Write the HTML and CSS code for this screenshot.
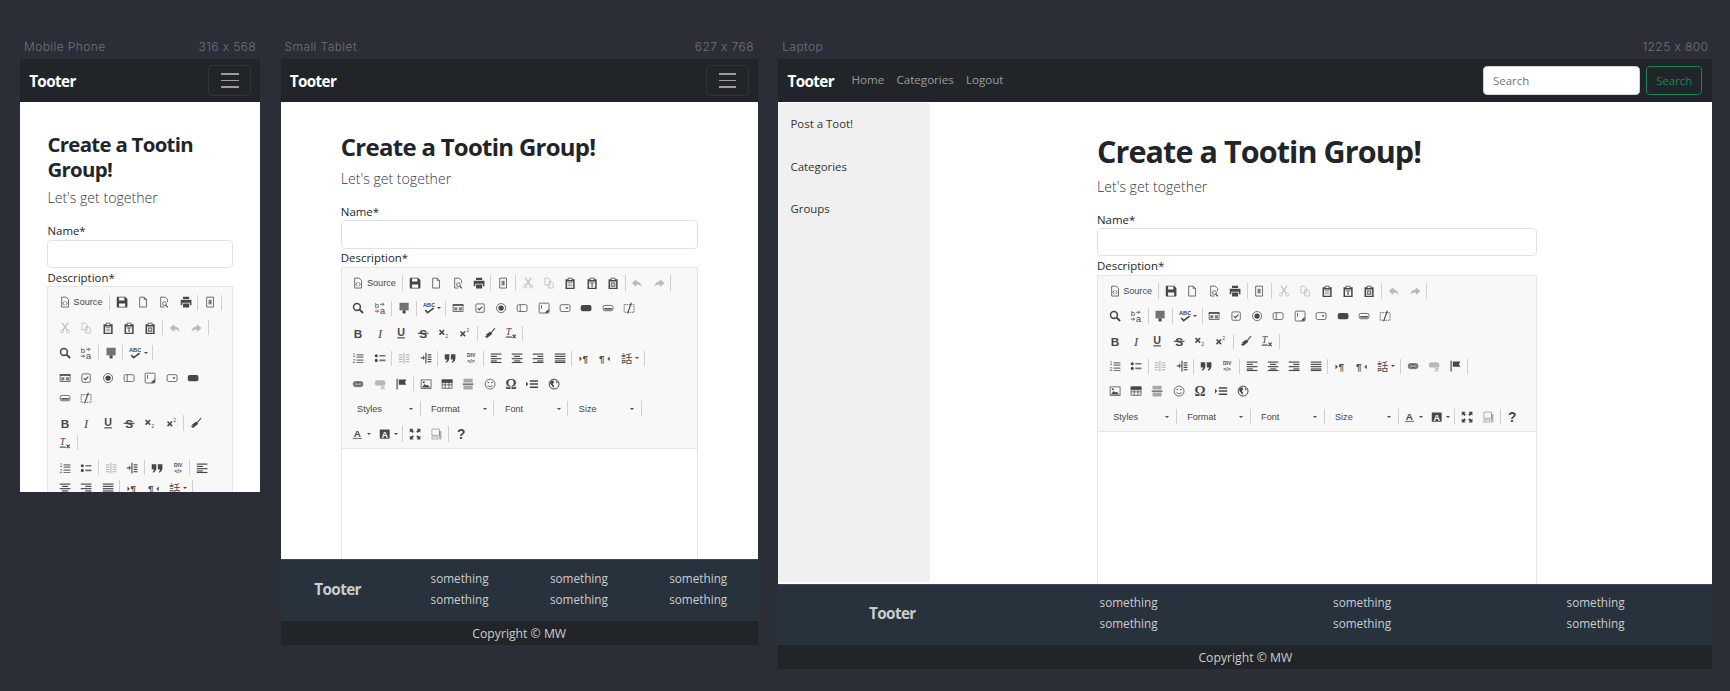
FILE: index.html
```html
<!DOCTYPE html>
<html lang="en">
<head>
    <meta charset="UTF-8">
    <title>Tooter - Responsive preview</title>
    <link rel="stylesheet" href="styles.css">
</head>
<body>
    <div class="devices">

        <section class="device">
            <div class="device-label"><span>Mobile Phone</span><span>316 x 568</span></div>
            <div class="screen screen-phone">
                <nav class="navbar">
                    <a class="brand">Tooter</a>
                    <button class="toggler" type="button"><span></span><span></span><span></span></button>
                </nav>
                <div class="page">
                    <main class="content">
                        <h1>Create a Tootin Group!</h1>
                        <p class="lead">Let's get together</p>
                        <label class="field-label">Name*</label>
                        <input class="field" type="text">
                        <label class="field-label">Description*</label>
                        <div class="editor"></div>
                    </main>
                </div>
            </div>
        </section>

        <section class="device">
            <div class="device-label"><span>Small Tablet</span><span>627 x 768</span></div>
            <div class="screen screen-tablet">
                <nav class="navbar">
                    <a class="brand">Tooter</a>
                    <button class="toggler" type="button"><span></span><span></span><span></span></button>
                </nav>
                <div class="page">
                    <main class="content">
                        <h1>Create a Tootin Group!</h1>
                        <p class="lead">Let's get together</p>
                        <label class="field-label">Name*</label>
                        <input class="field" type="text">
                        <label class="field-label">Description*</label>
                        <div class="editor"></div>
                    </main>
                </div>
                <footer class="footer">
                    <div class="footer-grid">
                        <div class="footer-brand">Tooter</div>
                        <ul><li>something</li><li>something</li></ul>
                        <ul><li>something</li><li>something</li></ul>
                        <ul><li>something</li><li>something</li></ul>
                    </div>
                    <div class="copyright">Copyright © MW</div>
                </footer>
            </div>
        </section>

        <section class="device">
            <div class="device-label"><span>Laptop</span><span>1225 x 800</span></div>
            <div class="screen screen-laptop">
                <nav class="navbar">
                    <a class="brand">Tooter</a>
                    <ul class="nav-links">
                        <li>Home</li>
                        <li>Categories</li>
                        <li>Logout</li>
                    </ul>
                    <form class="search">
                        <input class="search-input" type="text" placeholder="Search">
                        <button class="search-btn" type="button">Search</button>
                    </form>
                </nav>
                <div class="page">
                    <aside class="sidebar">
                        <a>Post a Toot!</a>
                        <a>Categories</a>
                        <a>Groups</a>
                    </aside>
                    <main class="content">
                        <h1>Create a Tootin Group!</h1>
                        <p class="lead">Let's get together</p>
                        <label class="field-label">Name*</label>
                        <input class="field" type="text">
                        <label class="field-label">Description*</label>
                        <div class="editor"></div>
                    </main>
                </div>
                <footer class="footer">
                    <div class="footer-grid">
                        <div class="footer-brand">Tooter</div>
                        <ul><li>something</li><li>something</li></ul>
                        <ul><li>something</li><li>something</li></ul>
                        <ul><li>something</li><li>something</li></ul>
                    </div>
                    <div class="copyright">Copyright © MW</div>
                </footer>
            </div>
        </section>

    </div>
    <script src="toolbar.js"></script>
</body>
</html>
```

FILE: styles.css
```css
body {
    margin: 0;
    background: #2b2e37;
    font-family: "Open Sans", "Noto Sans", sans-serif;
}

.devices {
    display: flex;
    align-items: flex-start;
    gap: 20.4px;
    padding: 39px 0 0 20px;
}

.device-label {
    display: flex;
    justify-content: space-between;
    height: 20px;
    padding: 0 4px;
    font-family: Inter, sans-serif;
    font-size: 12px;
    font-weight: 300;
    line-height: 15px;
    letter-spacing: 0.4px;
    color: #6f737e;
}

/* screens are laid out at their real size and shrunk like the preview does */
.screen {
    zoom: 0.7625;
    display: flex;
    flex-direction: column;
    overflow: hidden;
    background: #fff;
    color: #212529;
    font-size: 16px;
    line-height: 24px;
}

.screen-phone { width: 315px; height: 568px; }
.screen-tablet { width: 626px; height: 768px; }
.screen-laptop { width: 1225px; height: 800px; }

/* navbar */
.navbar {
    display: flex;
    flex: none;
    align-items: center;
    justify-content: space-between;
    height: 56px;
    padding: 0 12px;
    background: #212529;
}

.brand {
    padding-top: 2px;
    font-size: 20px;
    font-weight: 700;
    letter-spacing: -0.8px;
    color: #fff;
}

.toggler {
    display: flex;
    flex-direction: column;
    justify-content: center;
    gap: 6.5px;
    width: 56px;
    height: 40px;
    padding: 0 15px;
    background: none;
    border: 1px solid rgba(255, 255, 255, 0.07);
    border-radius: 6px;
}

.toggler span {
    height: 2px;
    background: rgba(255, 255, 255, 0.55);
}

.nav-links {
    display: flex;
    margin: 0 0 0 15px;
    padding: 0;
    list-style: none;
    color: rgba(255, 255, 255, 0.55);
    font-size: 15.2px;
}

.nav-links li { padding: 0 8px; }

.search {
    display: flex;
    gap: 8px;
    margin: 0 1px 0 auto;
}

.search-input {
    box-sizing: border-box;
    width: 206px;
    height: 38px;
    padding: 0 12px;
    border: 1px solid #ced4da;
    border-radius: 6px;
    font: 15px "Open Sans", sans-serif;
}

.search-input::placeholder { color: #6c757d; }

.search-btn {
    width: 74px;
    height: 38px;
    padding: 0;
    background: none;
    border: 1px solid #198754;
    border-radius: 6px;
    font: 15px "Open Sans", sans-serif;
    color: #198754;
}

/* page body */
.page {
    display: flex;
    flex: 1;
    min-height: 0;
    overflow: hidden;
}

.screen-phone .page { flex: none; }

.sidebar {
    flex: none;
    width: 199px;
    margin: 2px 0;
    background: #f0f0f0;
    font-size: 15px;
    color: #333;
}

.sidebar a {
    display: block;
    height: 55.6px;
    padding: 0 16px;
    line-height: 54px;
}

.content {
    flex: 1;
    min-width: 0;
    padding: 40px 36px 0;
}

.screen-tablet .content { padding: 41px 78px 0 79px; }
.screen-laptop .content { padding: 41px 230px 0 219px; }

h1 {
    margin: 0 0 8px;
    font-size: 26.74px;
    font-weight: 700;
    line-height: 1.2;
    letter-spacing: -0.9px;
}

.screen-tablet h1 { font-size: 31.4px; letter-spacing: -0.92px; }
.screen-laptop h1 { font-size: 40px; letter-spacing: -1.2px; }

.lead {
    margin: 0 0 16px;
    font-size: 18.5px;
    font-weight: 300;
    line-height: 30px;
    color: #343a40;
}

.field-label {
    display: block;
    font-size: 15px;
    line-height: 23px;
}

.field {
    display: block;
    box-sizing: border-box;
    width: 100%;
    height: 37px;
    margin-bottom: 1px;
    border: 1px solid #dee2e6;
    border-radius: 6px;
}

/* rich text editor */
.editor {
    height: 640px;
    border: 1px solid #e6e6e6;
}

.tb {
    padding: 7px 10px 0 8px;
    background: #f8f8f8;
    border-bottom: 1px solid #e6e6e6;
}

.tb-row,
.tb-group {
    display: flex;
    flex-wrap: wrap;
}

.tb-group { margin-bottom: 7px; }
.tb-row:last-child { margin-bottom: -1px; }

.tb-btn {
    display: flex;
    align-items: center;
    justify-content: center;
    width: 28px;
    height: 26px;
    color: #474747;
}

.tb-btn.off { color: #b9b9b9; }
.tb-btn.wide { width: 35px; justify-content: flex-start; padding-left: 6px; box-sizing: border-box; }
.tb-btn.src { width: 70px; justify-content: flex-start; padding-left: 6px; box-sizing: border-box; }

.ic { flex: none; fill: currentColor; }
.ic .s { fill: none; stroke: currentColor; }
.ic text { font-family: "Liberation Sans", sans-serif; stroke: none; }

.tb-text {
    margin-left: 3px;
    font: 12px/16px "Liberation Sans", sans-serif;
    color: #484848;
}

.caret {
    flex: none;
    margin-left: 3px;
    border: 3px solid transparent;
    border-top-color: #484848;
    border-bottom: 0;
}

.combo {
    display: flex;
    align-items: center;
    justify-content: space-between;
    box-sizing: border-box;
    width: 93px;
    height: 26px;
    padding: 0 8px 0 12px;
    font: 12px/16px "Liberation Sans", sans-serif;
    color: #484848;
}

.tb-sep {
    flex: none;
    width: 1px;
    height: 20px;
    margin: 3px 2px 3px 1px;
    background: #cfcfcf;
}

/* footer */
.footer {
    flex: none;
    color: #ccc;
}

.footer-grid {
    display: grid;
    grid-template-columns: repeat(4, 1fr);
    align-items: center;
    height: 81px;
    box-sizing: border-box;
    padding-bottom: 3px;
    background: #28323c;
    border-top: 1px solid #3b4653;
    text-align: center;
    font-size: 15.4px;
}

.screen-laptop .footer-grid { padding-bottom: 5px; }

.footer-grid ul {
    margin: 0;
    padding: 0;
    list-style: none;
}

.footer-grid li { line-height: 28px; }

.footer-brand {
    padding-right: 7px;
    font-size: 20px;
    font-weight: 700;
    letter-spacing: -0.8px;
}

.copyright {
    height: 31px;
    background: #212529;
    text-align: center;
    font-size: 16px;
    line-height: 33px;
}
```

FILE: toolbar.js
```js
// the same editor toolbar sits on all three screens, so build it once here
const s = 'class="s"';
const lines = rows => rows.map(r => `<path d="M${r[0]} ${r[1]}h${r[2]}v1.5h-${r[2]}z"/>`).join('');

const clip = `<path fill-rule="evenodd" d="M2 3h3V1h6v2h3v13H2zM6 2v2h4V2zM4 6v8h8V6z"/>`;

const ICONS = {
    source: `<path ${s} d="M3.5 1.5h6l3 3v10h-9z"/><path ${s} d="M7 7 5 9.5 7 12M9 7l2 2.5L9 12"/>`,
    save: `<path fill-rule="evenodd" d="M1 2q0-1 1-1h10l3 3v10q0 1-1 1H2q-1 0-1-1zm3 0v4h7V2zm0 8v4h8v-4z"/>`,
    newpage: `<path ${s} d="M3.5 1.5h6l3 3v10h-9zM9.5 1.5v3h3"/>`,
    preview: `<path ${s} d="M12.5 8V4.5l-3-3h-6v13h5"/><circle ${s} cx="8.5" cy="10" r="2.5"/><path ${s} stroke-width="1.6" d="M10 12l3 3"/>`,
    print: `<path d="M4 1h8v3H4zM1 5h14v7h-2V9H3v3H1zM4 10h8v5H4z"/>`,
    templates: `<path ${s} d="M3.5 1.5h9v13h-9z"/><path d="M6 5h4v6H6z" opacity=".7"/>`,
    cut: `<circle ${s} cx="4" cy="12.5" r="2"/><circle ${s} cx="12" cy="12.5" r="2"/><path ${s} stroke-width="1.5" d="M5 11 12 1M11 11 4 1"/>`,
    copy: `<path ${s} d="M2.5 1.5h5l2 2v7h-7zM7.5 6.5h4l2 2v6h-6z"/>`,
    paste: `${clip}<path d="M5 7h6v1H5zM5 9h6v1H5zM5 11h6v1H5z" opacity=".7"/>`,
    pastetext: `${clip}<path d="M5 7h6v1.5H9V13H7V8.5H5z" opacity=".7"/>`,
    pasteword: `${clip}<path d="M5 7h6v6H5z" opacity=".7"/><path d="M7 9h2v2H7z" fill="#f8f8f8"/>`,
    undo: `<path d="M7 3 1 8l6 5v-3c3 0 5 .5 7 3-.5-4-3-7-7-7z"/>`,
    redo: `<path transform="matrix(-1 0 0 1 16 0)" d="M7 3 1 8l6 5v-3c3 0 5 .5 7 3-.5-4-3-7-7-7z"/>`,
    find: `<circle ${s} stroke-width="2" cx="6.5" cy="6.5" r="4.5"/><path ${s} stroke-width="2.6" d="M10 10l4.5 4.5"/>`,
    replace: `<text x="1" y="8" font-size="10">b</text><text x="8" y="15.500" font-size="12">a</text><path ${s} d="M8 3h5M1 12h5M11 1l2 2-2 2M4 10l2 2-2 2"/>`,
    selectall: `<path d="M2 1h12v10H2z" opacity=".75"/><path d="M6 11h4v4H6z"/>`,
    spell: `<text x="0" y="7" font-size="7.500" font-weight="700">ABC</text><path ${s} stroke-width="2.200" d="M3 10.500l3 3.500 8-6"/>`,
    form: `<path ${s} d="M1.5 3.5h13v9h-13z"/><path d="M1 3h14v2H1z"/><path d="M3 7h4v4H3zM9 7h4v4H9z" opacity=".7"/>`,
    checkbox: `<rect ${s} x="2.5" y="2.5" width="11" height="11" rx="1.5"/><path ${s} stroke-width="1.5" d="M5 8l2 2 4-4"/>`,
    radio: `<circle ${s} cx="8" cy="8" r="6"/><circle cx="8" cy="8" r="3.5"/>`,
    textfield: `<rect ${s} x="1.5" y="3.5" width="13" height="9" rx="2"/><path d="M5 4h1v8H5z"/>`,
    textarea: `<rect ${s} x="1.5" y="1.5" width="13" height="13" rx="1.5"/><path d="M4 4h1v5H4zM9 14l5-5v5z"/>`,
    select: `<rect ${s} x="1.5" y="3.5" width="13" height="9" rx="2"/><path d="M8.5 7h4l-2 2.5z"/>`,
    button: `<rect x="1" y="4" width="14" height="8" rx="2.5"/>`,
    imagebutton: `<rect ${s} x="1.5" y="4.5" width="13" height="7" rx="2.5"/><path d="M3 8h10v2H3z"/>`,
    hidden: `<path ${s} stroke-dasharray="2 1" d="M1.5 3.5h13v10h-13z"/><path ${s} stroke-width="1.4" d="M11 1 6 15"/>`,
    bold: `<text x="8" y="14" text-anchor="middle" font-size="15.500" font-weight="700">B</text>`,
    italic: `<text x="8" y="14" text-anchor="middle" font-size="16.500" font-style="italic" style="font-family:'Liberation Serif',serif">I</text>`,
    underline: `<text x="8" y="12" text-anchor="middle" font-size="14" font-weight="700">U</text><path d="M3 13.500h10V15H3z"/>`,
    strike: `<text x="8" y="14" text-anchor="middle" font-size="15.500" font-weight="700">S</text><path d="M1 7.500h14V9H1z"/>`,
    sub: `<path ${s} stroke-width="2" d="M2 4l6 6M8 4l-6 6"/><text x="10" y="14" font-size="6">2</text>`,
    sup: `<path ${s} stroke-width="2" d="M2 6l6 6M8 6l-6 6"/><text x="10" y="6" font-size="6">2</text>`,
    brush: `<path d="M9 7 14 1l1 1-5 6z"/><path d="M8 6l3 3-2 1.5-5 4-3-2 3-1-2-1z"/>`,
    removeformat: `<text x="1" y="11" font-size="13" font-style="italic" style="font-family:'Liberation Serif',serif">T</text><path d="M1 12.5h8V14H1z"/><path ${s} stroke-width="1.5" d="M10 10l4 4.5M14 10l-4 4.5"/>`,
    numlist: `<text x="1" y="7" font-size="6">1</text><text x="1" y="14" font-size="6">2</text><path d="M6 3h9v1.5H6zM6 6h9v1.5H6zM6 10h9v1.5H6zM6 13h9v1.5H6z" opacity=".75"/>`,
    bullist: `<circle cx="3" cy="5" r="2"/><circle cx="3" cy="11" r="2"/><path d="M7 4h8v2H7zM7 10h8v2H7z" opacity=".75"/>`,
    outdent: `${lines([[1, 3, 5], [1, 6, 5], [1, 9, 5], [1, 12, 5], [10, 3, 5], [10, 6, 5], [10, 9, 5], [10, 12, 5]])}<path d="M7 1h1.5v14H7z"/>`,
    indent: `${lines([[1, 7, 5], [10, 3, 5], [10, 6, 5], [10, 9, 5], [10, 12, 5]])}<path d="M7 1h1.5v14H7zM4 4l2 3.5-2 3.5z"/>`,
    quote: `<path d="M1 3h6v6q0 3-4 5l-1-1q2-1 2-3H1zM9 3h6v6q0 3-4 5l-1-1q2-1 2-3H9z"/>`,
    creatediv: `<text x="8" y="7" text-anchor="middle" font-size="6.5" font-weight="700">DIV</text><text x="8" y="15" text-anchor="middle" font-size="7" font-weight="700">&lt;/&gt;</text>`,
    left: lines([[1, 2, 14], [1, 5, 8], [1, 8, 14], [1, 11, 8]]) + '<path d="M1 13h14v1.5H1z"/>',
    center: lines([[1, 2, 14], [4, 5, 8], [1, 8, 14], [4, 11, 8]]) + '<path d="M1 13h14v1.5H1z"/>',
    right: lines([[1, 2, 14], [7, 5, 8], [1, 8, 14], [7, 11, 8]]) + '<path d="M1 13h14v1.5H1z"/>',
    justify: lines([[1, 2, 14], [1, 5, 14], [1, 8, 14], [1, 11, 14]]) + '<path d="M1 13h14v1.5H1z"/>',
    ltr: `<path d="M2 6l3 3-3 3z"/><text x="6" y="13" font-size="13" font-weight="700">¶</text>`,
    rtl: `<text x="0" y="13" font-size="13" font-weight="700">¶</text><path d="M14 6l-3 3 3 3z"/>`,
    language: `<text x="0" y="14" font-size="15" style="font-family:'Noto Sans CJK SC',sans-serif">話</text>`,
    link: `<rect x="1" y="4" width="9" height="8" rx="4" opacity=".7"/><rect x="6" y="4" width="9" height="8" rx="4" opacity=".7"/><path d="M5 7.500h6v1H5z" fill="#f8f8f8"/>`,
    unlink: `<rect x="1" y="3" width="9" height="7" rx="3.500"/><rect x="6" y="3" width="9" height="7" rx="3.500"/><path ${s} stroke-width="1.600" d="M9 10l5 5M14 10l-5 5"/>`,
    anchor: `<path d="M2 1h1.500v14H2zM5 2h10l-2 3.500L15 9H5z"/>`,
    image: `<path fill-rule="evenodd" d="M1 2h14v12H1zM2 3v10h12V3z"/><path d="M2.500 12.500 6 8l2 2 2-1 3.500 3.500z"/><circle cx="5" cy="5.500" r="1.300"/>`,
    table: `<path ${s} d="M1.500 2.500h13v11h-13zM1.500 9h13M1.500 6h13M5.500 6v7.500M10.500 6v7.500"/><path d="M1 2h14v4H1z"/>`,
    hr: `<path d="M2 1h12v5H2zM2 10h12v5H2z" opacity=".45"/><path d="M1 7.300h14v1.500H1z"/>`,
    smiley: `<circle ${s} cx="8" cy="8" r="6.500"/><circle cx="5.500" cy="6" r="1"/><circle cx="10.500" cy="6" r="1"/><path ${s} d="M4.500 10q3.500 3 7 0"/>`,
    omega: `<text x="8" y="14" text-anchor="middle" font-size="18" font-weight="700" style="font-family:'Liberation Serif',serif">Ω</text>`,
    pagebreak: `<path d="M0 5l3 3-3 3zM5 3h11v2H5zM5 7h11v2H5zM5 11h11v2H5z"/>`,
    iframe: `<circle ${s} stroke-width="1.300" cx="8" cy="8" r="6.500"/><path d="M3 4l4-1 1 3-2 2 2 2-1 3-2-3-2-2zM10 3l3 3-2 1z"/>`,
    textcolor: `<text x="7" y="11.500" text-anchor="middle" font-size="13" font-weight="700">A</text><path d="M1 13h12v1.500H1z" opacity=".7"/>`,
    bgcolor: `<rect x="1" y="2" width="13" height="12" rx="1"/><text x="7.500" y="12.500" text-anchor="middle" font-size="12" font-weight="700" fill="#f8f8f8">A</text>`,
    maximize: `<path d="M1 1h5L4.500 2.500l2 2-2 2-2-2L1 6zM15 1v5l-1.500-1.500-2 2-2-2 2-2L10 1zM1 15v-5l1.500 1.500 2-2 2 2-2 2L6 15zM15 15h-5l1.500-1.500-2-2 2-2 2 2L15 10z"/>`,
    showblocks: `<path ${s} opacity=".55" d="M2.500 1.500h10v8h-10zM2.500 11.500h8v3h-8z"/><path d="M12 4h3v11h-3z" opacity=".4"/>`,
    about: `<text x="8" y="14.500" text-anchor="middle" font-size="18" font-weight="700">?</text>`
};

const OFF = ['cut', 'copy', 'undo', 'redo', 'outdent', 'unlink'];

// rows end at a forced break, groups wrap as a block when they don't fit
const TOOLBAR = [
    [
        ['source', '|', 'save', 'newpage', 'preview', 'print', '|', 'templates', '|'],
        ['cut', 'copy', 'paste', 'pastetext', 'pasteword', '|', 'undo', 'redo', '|'],
        ['find', 'replace', '|', 'selectall', '|', 'spell+', '|'],
        ['form', 'checkbox', 'radio', 'textfield', 'textarea', 'select', 'button', 'imagebutton', 'hidden']
    ],
    [
        ['bold', 'italic', 'underline', 'strike', 'sub', 'sup', '|', 'brush', 'removeformat', '|'],
        ['numlist', 'bullist', '|', 'outdent', 'indent', '|', 'quote', 'creatediv', '|', 'left', 'center', 'right', 'justify', '|', 'ltr', 'rtl', 'language+', '|'],
        ['link', 'unlink', 'anchor', '|'],
        ['image', 'table', 'hr', 'smiley', 'omega', 'pagebreak', 'iframe']
    ],
    [
        ['Styles', '|', 'Format', '|', 'Font', '|', 'Size', '|'],
        ['textcolor+', 'bgcolor+', '|'],
        ['maximize', 'showblocks', '|'],
        ['about']
    ]
];

function icon(name) {
    return `<svg class="ic" viewBox="0 0 16 16" width="16" height="16">${ICONS[name]}</svg>`;
}

function renderItem(item) {
    if (item === '|') return '<span class="tb-sep"></span>';
    if (/^[A-Z]/.test(item)) return `<span class="combo">${item}<i class="caret"></i></span>`;
    if (item === 'source') return `<span class="tb-btn src">${icon('source')}<span class="tb-text">Source</span></span>`;
    if (item.endsWith('+')) {
        return `<span class="tb-btn wide">${icon(item.slice(0, -1))}<i class="caret"></i></span>`;
    }
    return `<span class="tb-btn${OFF.includes(item) ? ' off' : ''}">${icon(item)}</span>`;
}

const toolbarHtml = TOOLBAR.map(row =>
    '<div class="tb-row">' + row.map(group =>
        '<div class="tb-group">' + group.map(renderItem).join('') + '</div>'
    ).join('') + '</div>'
).join('');

document.querySelectorAll('.editor').forEach(editor => {
    editor.innerHTML = `<div class="tb">${toolbarHtml}</div>`;
});
```
